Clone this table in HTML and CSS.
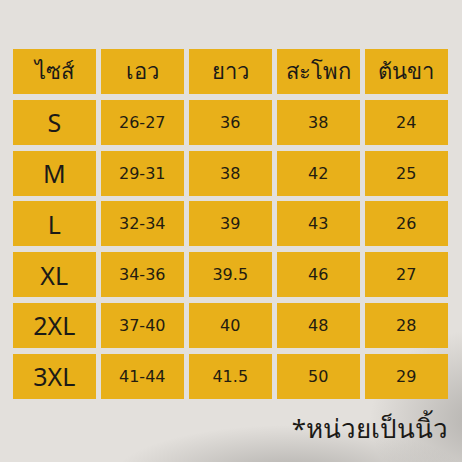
FILE: index.html
```html
<!DOCTYPE html>
<html lang="th">
<head>
<meta charset="utf-8">
<link rel="stylesheet" href="styles.css">
</head>
<body>
<div class="page">
  <div class="chart">
    <div class="cell head">ไซส์</div>
    <div class="cell head">เอว</div>
    <div class="cell head">ยาว</div>
    <div class="cell head">สะโพก</div>
    <div class="cell head">ต้นขา</div>

    <div class="cell size">S</div>
    <div class="cell">26-27</div>
    <div class="cell">36</div>
    <div class="cell">38</div>
    <div class="cell">24</div>

    <div class="cell size">M</div>
    <div class="cell">29-31</div>
    <div class="cell">38</div>
    <div class="cell">42</div>
    <div class="cell">25</div>

    <div class="cell size">L</div>
    <div class="cell">32-34</div>
    <div class="cell">39</div>
    <div class="cell">43</div>
    <div class="cell">26</div>

    <div class="cell size">XL</div>
    <div class="cell">34-36</div>
    <div class="cell">39.5</div>
    <div class="cell">46</div>
    <div class="cell">27</div>

    <div class="cell size">2XL</div>
    <div class="cell">37-40</div>
    <div class="cell">40</div>
    <div class="cell">48</div>
    <div class="cell">28</div>

    <div class="cell size">3XL</div>
    <div class="cell">41-44</div>
    <div class="cell">41.5</div>
    <div class="cell">50</div>
    <div class="cell">29</div>
  </div>
  <div class="note">*หน่วยเป็นนิ้ว</div>
</div>
</body>
</html>
```
FILE: styles.css
```css
html, body {
  margin: 0;
  padding: 0;
}
body {
  width: 462px;
  height: 462px;
  overflow: hidden;
  background:
    radial-gradient(ellipse 180px 55px at 290px 480px, rgba(140,138,135,0.6), rgba(140,138,135,0) 100%),
    radial-gradient(ellipse 110px 90px at 480px 420px, rgba(150,148,145,0.6), rgba(150,148,145,0) 100%),
    #e3e0dc;
  font-family: "Noto Sans", "Liberation Sans", sans-serif;
  color: #1b1a17;
}
.page {
  padding: 49px 0 0 13px;
  width: 435px;
}
.chart {
  display: grid;
  grid-template-columns: repeat(5, 82.5px);
  grid-auto-rows: 45px;
  column-gap: 5.5px;
  row-gap: 5.8px;
}
.cell {
  background: #e8b01a;
  display: flex;
  align-items: center;
  justify-content: center;
  font-family: "DejaVu Sans", "Liberation Sans", sans-serif;
  font-size: 16px;
  color: #231c10;
}
.head {
  font-family: "Noto Sans", sans-serif;
  font-size: 22px;
  color: #1b1a17;
}
.size {
  font-family: "Noto Sans", sans-serif;
  font-size: 25px;
  color: #1b1a17;
}
.note {
  margin-top: 12px;
  text-align: right;
  font-size: 26px;
  line-height: 34px;
}
```
